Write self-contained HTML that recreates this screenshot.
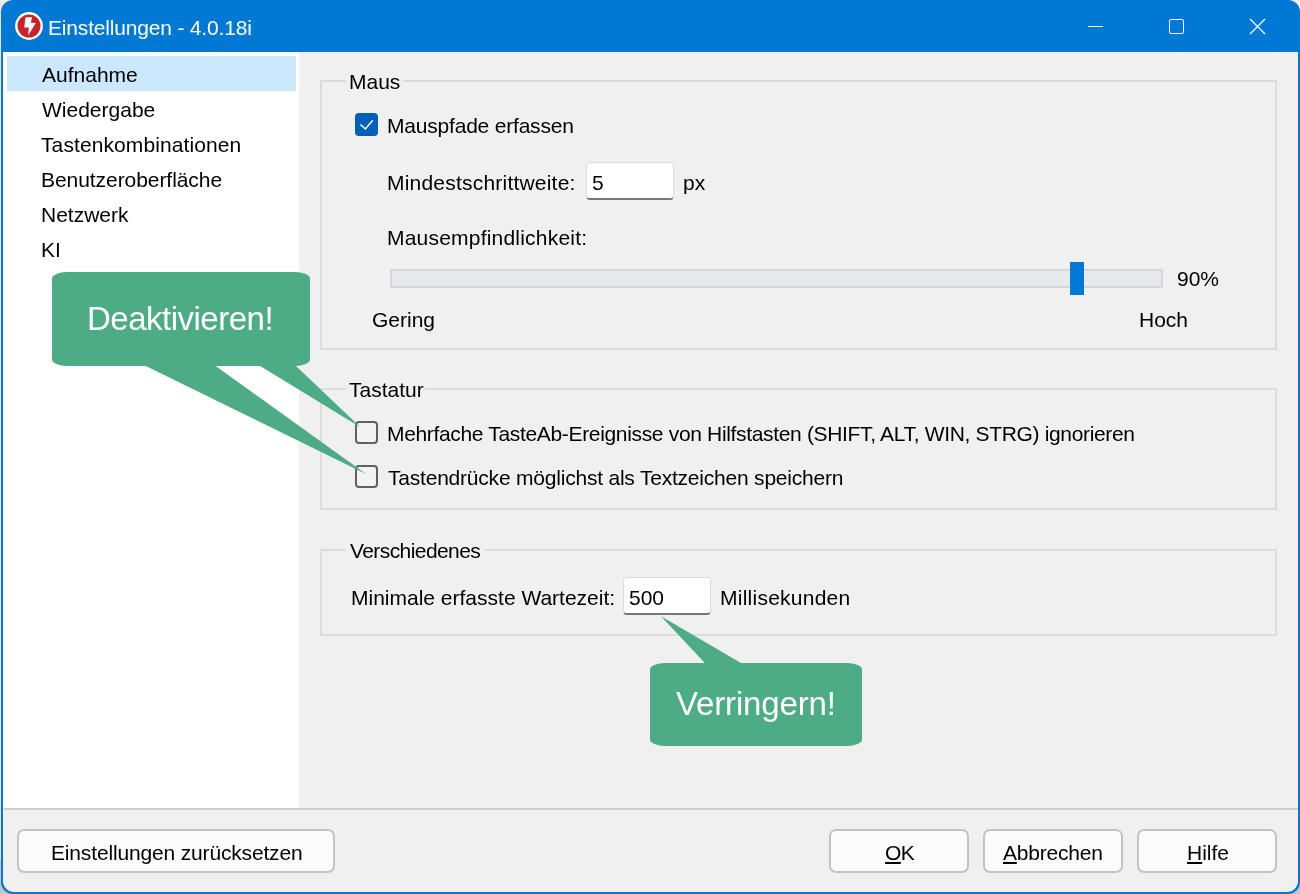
<!DOCTYPE html>
<html><head><meta charset="utf-8">
<style>
*{box-sizing:border-box;margin:0;padding:0}
html,body{width:1300px;height:894px;overflow:hidden;background:#eeeeee}
body{position:relative;font-family:"Liberation Sans",sans-serif;color:#000}
.abs{position:absolute}
.t{position:absolute;font-size:21px;line-height:21px;white-space:pre;color:#000;will-change:transform}
#win{position:absolute;left:1px;top:0;width:1299px;height:894px;border-radius:12px;background:#0078d4}
#title{position:absolute;left:0;top:0;width:1300px;height:52px;background:#0078d4}
#left{position:absolute;left:3px;top:52px;width:296px;height:756px;background:#fff}
#right{position:absolute;left:299px;top:52px;width:999px;height:756px;background:#f0f0f0}
#bottom{position:absolute;left:3px;top:808px;width:1295px;height:84px;background:#f0f0f0}
.sel{position:absolute;left:7px;top:56px;width:289px;height:35px;background:#cce8ff}
.grp{position:absolute;border:2px solid #dcdcdc}
.gap{position:absolute;background:#f0f0f0;height:4px}
.btn{position:absolute;top:829px;height:44px;background:#fbfbfb;border:2px solid #c3c3c3;border-radius:7px}
.inp{position:absolute;background:#fff;border:1.5px solid #dcdcdc;border-bottom:2px solid #777;border-radius:4px}
.cb{position:absolute;width:23px;height:23px;border:2px solid #616161;border-radius:4px;background:#f3f3f3}
.u{text-decoration:underline;text-decoration-thickness:2px;text-underline-offset:2px}
.call{position:absolute;background:#4dac86;border-radius:15px/6.5px}
.ct{position:absolute;font-size:33px;line-height:33px;color:#fff;white-space:pre;will-change:transform}
</style></head><body>
<div class="abs" style="left:0;top:0;width:1px;height:894px;background:#e8e4dc"></div>
<div class="abs" style="left:0;top:860px;width:1300px;height:34px;background:#c4c4c4"></div>
<div id="win"></div>
<div class="abs" style="left:0;top:0;width:1300px;height:894px;clip-path:inset(52px 2px 2px 3px round 0 0 11px 11px)">
<div id="left"></div>
<div id="right"></div>
<div id="bottom"></div>
<div class="abs" style="left:4px;top:808px;width:1294px;height:2px;background:#cdcdcd"></div>
</div>

<!-- title bar content -->
<svg class="abs" style="left:14px;top:11px" width="30" height="30" viewBox="0 0 30 30">
  <circle cx="15" cy="15" r="13.9" fill="#fff"/>
  <circle cx="15" cy="15" r="11.5" fill="#c4252b"/>
  <path d="M11.6 6.2 L18 6.2 L16.9 11.7 L21.8 11.9 L14.1 24.5 L14.8 16.4 L10.2 16.4 Z" fill="#fff"/>
</svg>
<div class="t" style="left:48px;top:17px;color:#fff;letter-spacing:-0.18px">Einstellungen - 4.0.18i</div>
<div class="abs" style="left:1088px;top:26px;width:15px;height:1px;background:#fff"></div>
<div class="abs" style="left:1169px;top:19px;width:15px;height:15px;border:1.5px solid #fff;border-radius:2px"></div>
<svg class="abs" style="left:1249px;top:18px" width="17" height="17" viewBox="0 0 17 17">
  <path d="M1 1 L16 16 M16 1 L1 16" stroke="#fff" stroke-width="1.3"/>
</svg>

<!-- left nav -->
<div class="sel"></div>
<div class="t" style="left:42px;top:64px">Aufnahme</div>
<div class="t" style="left:42px;top:99px">Wiedergabe</div>
<div class="t" style="left:41px;top:134px;letter-spacing:0.1px">Tastenkombinationen</div>
<div class="t" style="left:41px;top:169px;letter-spacing:-0.06px">Benutzeroberfläche</div>
<div class="t" style="left:41px;top:204px">Netzwerk</div>
<div class="t" style="left:41px;top:239px">KI</div>

<!-- Maus group -->
<div class="grp" style="left:320px;top:80px;width:957px;height:270px"></div>
<div class="gap" style="left:346px;top:79px;width:57px"></div>
<div class="t" style="left:349px;top:71px">Maus</div>
<div class="abs" style="left:355px;top:113px;width:23px;height:23px;background:#005fb8;border-radius:4px"></div>
<svg class="abs" style="left:355px;top:113px" width="23" height="23" viewBox="0 0 23 23">
  <path d="M5.4 11.5 L10.4 15.9 L17.7 7.2" stroke="#fff" stroke-width="1.45" fill="none"/>
</svg>
<div class="t" style="left:387px;top:115px;letter-spacing:-0.2px">Mauspfade erfassen</div>
<div class="t" style="left:387px;top:172px;letter-spacing:0.21px">Mindestschrittweite:</div>
<div class="inp" style="left:586px;top:162px;width:88px;height:38px"></div>
<div class="t" style="left:592px;top:172px">5</div>
<div class="t" style="left:683px;top:172px">px</div>
<div class="t" style="left:387px;top:227px;letter-spacing:0.21px">Mausempfindlichkeit:</div>
<div class="abs" style="left:390px;top:269px;width:773px;height:19px;background:#e7eaea;border:2px solid #d6d6d6"></div>
<div class="abs" style="left:1070px;top:262px;width:14px;height:33px;background:#0078d7"></div>
<div class="t" style="left:1177px;top:268px">90%</div>
<div class="t" style="left:372px;top:309px">Gering</div>
<div class="t" style="left:1139px;top:309px">Hoch</div>

<!-- Tastatur group -->
<div class="grp" style="left:320px;top:388px;width:957px;height:122px"></div>
<div class="gap" style="left:346px;top:387px;width:79px"></div>
<div class="t" style="left:349px;top:379px">Tastatur</div>
<div class="cb" style="left:355px;top:421px"></div>
<div class="t" style="left:387px;top:423px;letter-spacing:-0.335px">Mehrfache TasteAb-Ereignisse von Hilfstasten (SHIFT, ALT, WIN, STRG) ignorieren</div>
<div class="cb" style="left:355px;top:465px"></div>
<div class="t" style="left:388px;top:467px;letter-spacing:-0.21px">Tastendrücke möglichst als Textzeichen speichern</div>

<!-- Verschiedenes group -->
<div class="grp" style="left:320px;top:549px;width:957px;height:87px"></div>
<div class="gap" style="left:346px;top:548px;width:139px"></div>
<div class="t" style="left:350px;top:540px;letter-spacing:-0.58px">Verschiedenes</div>
<div class="t" style="left:351px;top:587px">Minimale erfasste Wartezeit:</div>
<div class="inp" style="left:623px;top:577px;width:88px;height:38px"></div>
<div class="t" style="left:629px;top:587px">500</div>
<div class="t" style="left:720px;top:587px;letter-spacing:0.25px">Millisekunden</div>

<!-- buttons -->
<div class="btn" style="left:17px;width:318px"></div>
<div class="t" style="left:51px;top:842px;letter-spacing:-0.16px">Einstellungen zurücksetzen</div>
<div class="btn" style="left:829px;width:140px"></div>
<div class="t" style="left:885px;top:842px;letter-spacing:-0.6px"><span class="u">O</span>K</div>
<div class="btn" style="left:983px;width:140px"></div>
<div class="t" style="left:1003px;top:842px;letter-spacing:-0.2px"><span class="u">A</span>bbrechen</div>
<div class="btn" style="left:1137px;width:140px"></div>
<div class="t" style="left:1187px;top:842px"><span class="u">H</span>ilfe</div>

<!-- callouts -->
<svg class="abs" style="left:0;top:0" width="1300" height="894" viewBox="0 0 1300 894">
  <path d="M129.5 358 L204.5 358 L366.4 474.3 Z" fill="#4dac86"/>
  <path d="M246.9 358 L287.6 358 L360.4 427.3 Z" fill="#4dac86"/>
  <path d="M712.3 671 L754.7 671 L661 616.3 Z" fill="#4dac86"/>
</svg>
<div class="call" style="left:52px;top:272px;width:258px;height:94px"></div>
<div class="ct" style="left:86.5px;top:302px;letter-spacing:-0.5px">Deaktivieren!</div>
<div class="call" style="left:650px;top:663px;width:212px;height:83px"></div>
<div class="ct" style="left:676px;top:687px;letter-spacing:-0.15px">Verringern!</div>
</body></html>
